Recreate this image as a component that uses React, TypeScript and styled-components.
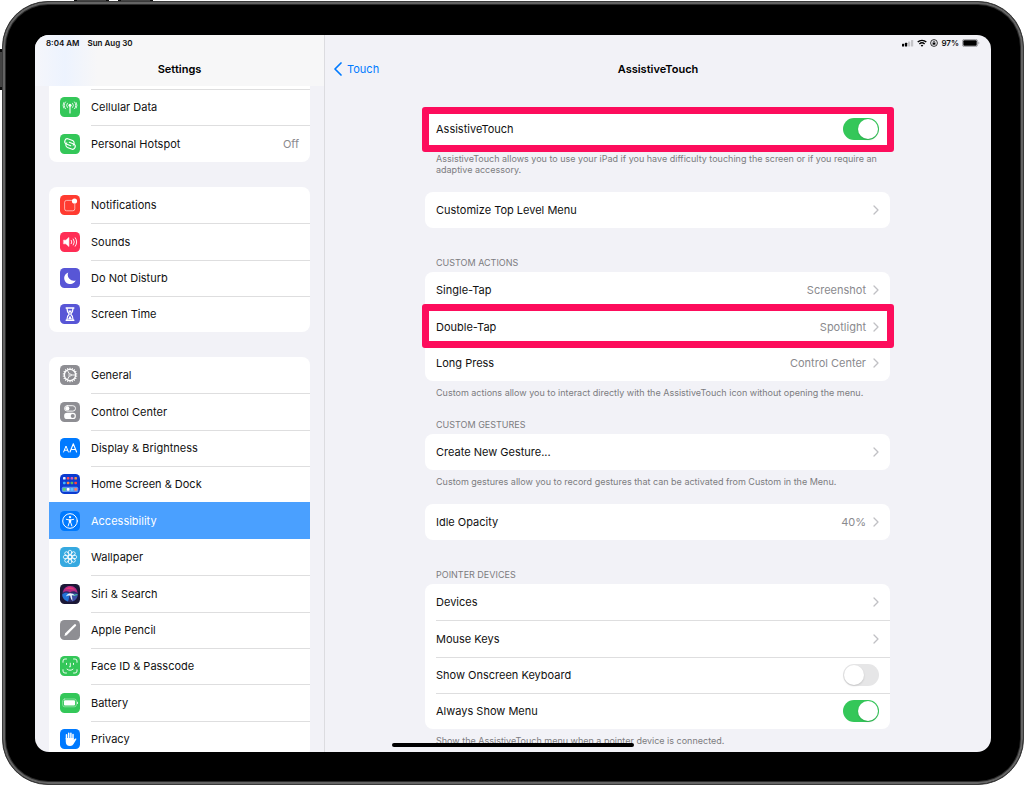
import React, { useState } from "react";
import styled, { createGlobalStyle } from "styled-components";

const PINK = "#fd0d5c";
const GREEN = "#34c759";
const GREY = "#8e8e93";
const LINE = "#dededf";

const GlobalStyle = createGlobalStyle`
  *, *::before, *::after { box-sizing: border-box; }
  body {
    margin: 0;
    background: #fff;
    font-family: Inter, "Liberation Sans", sans-serif;
    font-size: 11px;
    color: #111;
  }
  h1, h2, p, ul { margin: 0; padding: 0; }
`;

const Page = styled.div`
  position: relative;
  height: 100vh;
  padding: 1px 0 0 2px;
  overflow: hidden;
`;

const HardwareKey = styled.div`
  position: absolute;
  border: solid #0c0c0c;
  background: #444;
`;

const TopKey = styled(HardwareKey)<{ $left: number }>`
  top: 0;
  left: ${(p) => p.$left}px;
  width: 35px;
  height: 4px;
  border-width: 0 3px;
`;

const SideKey = styled(HardwareKey)`
  left: 0;
  top: 49px;
  width: 4px;
  height: 41px;
  border-width: 3px 0;
`;

const Device = styled.div`
  position: relative;
  display: flex;
  height: 100%;
  padding: 33px 32px 32px;
  border: 1px solid #3a3a3a;
  border-radius: 46px;
  background: #000;
  box-shadow: inset 0 0 0 2px #646464, inset 0 0 0 3px #2c2c2c;
`;

const Screen = styled.div`
  position: relative;
  flex: 1;
  min-width: 0;
  display: grid;
  grid-template-columns: 290px minmax(0, 1fr);
  overflow: hidden;
  border-radius: 14px;
  background: #f2f2f7;
`;

const Sidebar = styled.nav`
  display: flex;
  flex-direction: column;
  min-height: 0;
  border-right: 1px solid #dcdce0;
`;

const PaneTop = styled.header`
  flex: none;
  height: 51px;
`;

const SidebarTop = styled(PaneTop)`
  background: linear-gradient(90deg, #f5f6fb 0, #edf3fe 30px, #f7f7f8 62px);
`;

const StatusBar = styled.div<{ $end?: boolean }>`
  display: flex;
  align-items: center;
  justify-content: ${(p) => (p.$end ? "flex-end" : "flex-start")};
  gap: ${(p) => (p.$end ? 3 : 8)}px;
  height: 16px;
  padding: 0 11px;
  font-size: 8px;
  font-weight: 600;
`;

const TitleBar = styled.div`
  display: grid;
  grid-template-columns: 1fr auto 1fr;
  align-items: center;
  height: 35px;
  padding: 0 9px;
`;

const Title = styled.h1`
  grid-column: 2;
  font-size: 11px;
  line-height: 16px;
  font-weight: 600;
  color: #000;
`;

const BackLink = styled.a`
  display: flex;
  align-items: center;
  gap: 5px;
  color: #007aff;
  text-decoration: none;
  line-height: 16px;
`;

const SidebarList = styled.div`
  flex: 1;
  min-height: 0;
  overflow: hidden;
  display: flex;
  flex-direction: column;
  gap: 25px;
  padding: 0 14px;
`;

const MenuGroup = styled.ul<{ $continued?: boolean }>`
  flex: none;
  list-style: none;
  overflow: hidden;
  background: #fff;
  border-radius: ${(p) => (p.$continued ? "0 0 8px 8px" : "8px")};
  padding-top: ${(p) => (p.$continued ? 3 : 0)}px;
`;

const MenuLink = styled.a<{ $active?: boolean }>`
  display: flex;
  align-items: stretch;
  gap: 11px;
  height: 36px;
  padding-left: 11px;
  color: ${(p) => (p.$active ? "#fff" : "inherit")};
  background: ${(p) => (p.$active ? "#4aa0ff" : "transparent")};
  text-decoration: none;

  li:nth-child(5n + 2) > &, li:nth-child(5n + 5) > & { height: 37px; }

  svg { align-self: center; flex: none; }
`;

const MenuText = styled.span<{ $line?: boolean }>`
  flex: 1;
  display: flex;
  align-items: center;
  justify-content: space-between;
  padding-right: 11px;
  box-shadow: ${(p) => (p.$line ? `inset 0 1px ${LINE}` : "none")};
`;

const Muted = styled.span`
  color: #8a8a8e;
`;

const Main = styled.main`
  display: flex;
  flex-direction: column;
  min-height: 0;
  overflow: hidden;
`;

const MainBody = styled.div`
  display: flex;
  flex-direction: column;
  gap: 17px;
  padding: 25px 101px 0 100px;
`;

const Section = styled.section<{ $bare?: boolean }>`
  padding-bottom: ${(p) => (p.$bare ? 8 : 0)}px;
`;

const SectionTitle = styled.h2`
  padding: 4px 11px;
  font-size: 9px;
  line-height: 11px;
  font-weight: 400;
  color: #7c7c80;
  text-transform: uppercase;
`;

const Note = styled.p`
  padding: 6px 11px 0;
  font-size: 9px;
  line-height: 11px;
  color: #7c7c80;
`;

const Card = styled.div`
  border-radius: 8px;
  background: #fff;
`;

const Row = styled.div`
  position: relative;
  display: flex;
  height: 36px;
  padding-left: 11px;

  &:nth-child(5n + 2), &:nth-child(5n + 5) { height: 37px; }
`;

const rowInner = `
  flex: 1;
  display: flex;
  align-items: center;
  padding: 0 11px 0 0;
  gap: 7px;
`;

const RowButton = styled.button<{ $line?: boolean }>`
  ${rowInner}
  border: 0;
  box-shadow: ${(p) => (p.$line ? `inset 0 1px ${LINE}` : "none")};
  background: none;
  font: inherit;
  color: inherit;
  text-align: left;
`;

const RowLabel = styled.label<{ $line?: boolean }>`
  ${rowInner}
  box-shadow: ${(p) => (p.$line ? `inset 0 1px ${LINE}` : "none")};
`;

const Grow = styled.span`
  flex: 1;
`;

const Switch = styled.input`
  appearance: none;
  position: relative;
  flex: none;
  width: 36px;
  height: 22px;
  margin: 0;
  border-radius: 11px;
  background: #e6e6e7;

  &::after {
    content: "";
    position: absolute;
    top: 1px;
    left: 1px;
    width: 20px;
    height: 20px;
    border-radius: 50%;
    background: #fff;
    box-shadow: 0 1px 2px rgba(0, 0, 0, 0.15);
  }
  &:checked { background: ${GREEN}; }
  &:checked::after { left: 15px; }
`;

const Highlight = styled.span<{ $height: number }>`
  position: absolute;
  top: -4px;
  left: -3px;
  right: -4px;
  height: ${(p) => p.$height}px;
  border: 7px solid ${PINK};
  border-radius: 3px;
  pointer-events: none;
  z-index: 1;
`;

const HomeIndicator = styled.div`
  position: absolute;
  bottom: 5px;
  left: 50%;
  width: 242px;
  height: 4px;
  margin-left: -121px;
  border-radius: 2px;
  background: #000;
  z-index: 2;
`;

function Tile({ fill, children }: { fill: string; children: React.ReactNode }) {
  return (
    <svg width="20" height="20" viewBox="0 0 20 20" fill="none" stroke="#fff" strokeLinecap="round" strokeLinejoin="round" aria-hidden="true">
      <rect width="20" height="20" rx="4.5" fill={fill} stroke="none" />
      {children}
    </svg>
  );
}

const spokes = (n: number) => Array.from({ length: n }, (_, i) => (i * 360) / n);

const icons = {
  cellular: (
    <Tile fill={GREEN}>
      <circle cx="10" cy="8.3" r="1.5" fill="#fff" stroke="none" />
      <path d="M10 9v7" strokeWidth="1.1" />
      <path d="M7.4 6.200a3.200 3.200 0 0 0 0 4.300M12.600 6.200a3.200 3.200 0 0 1 0 4.300M5.500 4.900a5 5 0 0 0 0 6.900M14.500 4.900a5 5 0 0 1 0 6.900M3.700 5.600a6 6 0 0 0 0 5.400M16.300 5.600a6 6 0 0 1 0 5.400" strokeWidth=".8" />
    </Tile>
  ),
  hotspot: (
    <Tile fill={GREEN}>
      <g transform="rotate(22 10 10)" strokeWidth="1.1">
        <path d="M11.300 11.300H6.700a2.700 2.700 0 0 1 0-5.400h4.400a2.700 2.700 0 0 1 2.300 4" />
        <path d="M8.700 8.700h4.600a2.700 2.700 0 0 1 0 5.400H8.900a2.700 2.700 0 0 1-2.300-4" />
      </g>
    </Tile>
  ),
  notifications: (
    <Tile fill="#ff3b30">
      <path d="M11.500 5.400H6.600a2 2 0 0 0-2 2v6.400a2 2 0 0 0 2 2h6.200a2 2 0 0 0 2-2V9" strokeWidth=".7" strokeOpacity=".85" />
      <circle cx="14.500" cy="6" r="2.600" fill="#fff" stroke="none" />
    </Tile>
  ),
  sounds: (
    <Tile fill="#ff2d55">
      <path d="M3.800 8.200h2.100l3-2.700v9l-3-2.700H3.800z" fill="#fff" strokeWidth=".6" />
      <path d="M11.300 8.300a2.900 2.900 0 0 1 0 3.400M13.300 7a5 5 0 0 1 0 6M15.300 5.800a7.400 7.400 0 0 1 0 8.400" strokeWidth=".9" />
    </Tile>
  ),
  moon: (
    <Tile fill="#5856d6">
      <path d="M8.300 4.400a6 6 0 1 0 7.400 8.100A6 6 0 0 1 8.300 4.400z" fill="#fff" stroke="none" />
    </Tile>
  ),
  hourglass: (
    <Tile fill="#5856d6">
      <path d="M6.200 4h7.600M6.200 16.200h7.600" strokeWidth="1.500" />
      <path d="M7 4.500c0 3.200.6 4 2.300 5.600C7.600 11.600 7 12.800 7 15.800M13 4.500c0 3.200-.6 4-2.300 5.600 1.700 1.500 2.300 2.700 2.300 5.700" strokeWidth="1.300" />
      <path d="M8.300 6.500h3.400L10 9.500zM10 11.500l2 3.700H8z" fill="#fff" stroke="none" />
    </Tile>
  ),
  general: (
    <Tile fill={GREY}>
      <circle cx="10" cy="10" r="5.600" strokeWidth="1.300" />
      {spokes(18).map((a) => (
        <path key={a} d="M10 2.700v1.500" strokeWidth="1.100" strokeLinecap="butt" transform={`rotate(${a} 10 10)`} />
      ))}
      <path d="M10 10h5M10 10l-2.600-4.500M10 10l-2.600 4.500" strokeWidth=".9" />
      <circle cx="10" cy="10" r="1.200" fill={GREY} strokeWidth=".7" />
    </Tile>
  ),
  control: (
    <Tile fill={GREY}>
      <rect x="4.500" y="3.700" width="11" height="5.400" rx="2.700" strokeWidth=".9" />
      <circle cx="7.300" cy="6.400" r="2.100" fill="#fff" stroke="none" />
      <rect x="4.100" y="10.700" width="11.800" height="6.400" rx="3.200" fill="#fff" stroke="none" />
      <circle cx="12.700" cy="13.900" r="2" fill={GREY} stroke="none" />
    </Tile>
  ),
  display: (
    <Tile fill="#007aff">
      <path d="M3.600 14l2.400-6 2.400 6M4.400 12.200h3.200" strokeWidth="1" />
      <path d="M10 14l3.300-8.200 3.300 8.200M11.100 11.500h4.400" strokeWidth="1.100" />
    </Tile>
  ),
  home: (
    <Tile fill="#0b3bd0">
      {["#e8eefc", "#ff4b5c", "#d65ab8", "#f0904a", "#3fb6ff", "#ff8a3c", "#5fb45f", "#ff4040"].map((c, i) => (
        <rect key={i} x={3 + (i % 4) * 3.8} y={3 + Math.floor(i / 4) * 4.7} width="2.600" height="2.600" rx=".7" fill={c} stroke="none" />
      ))}
      <rect x="1.800" y="12.800" width="16.400" height="5.200" rx="1.500" fill="#5a94ee" stroke="none" />
      {["#55d868", "#fff", "#5fc8ff", "#ff7a6a"].map((c, i) => (
        <rect key={c} x={3 + i * 3.8} y="14" width="2.700" height="2.700" rx=".7" fill={c} stroke="none" />
      ))}
    </Tile>
  ),
  accessibility: (
    <Tile fill="#007aff">
      <circle cx="10" cy="10" r="7.300" strokeWidth="1" />
      <circle cx="10" cy="6.100" r="1.200" fill="#fff" stroke="none" />
      <path d="M6.300 8.300l2.700.6h2l2.700-.6M9.300 9v2.500L8.100 15M10.700 9v2.500l1.200 3.500" strokeWidth="1" />
      <path d="M9 8.800h2v3H9z" fill="#fff" stroke="none" />
    </Tile>
  ),
  wallpaper: (
    <Tile fill="#36a9e0">
      {spokes(8).map((a) => (
        <ellipse key={a} cx="10" cy="5.700" rx="1.900" ry="2.500" strokeWidth=".75" transform={`rotate(${a} 10 10)`} />
      ))}
      <circle cx="10" cy="10" r="2" strokeWidth="1.100" />
    </Tile>
  ),
  siri: (
    <Tile fill="#1b1836">
      <circle cx="10" cy="10" r="8" fill="#2b2a68" stroke="none" />
      <path d="M3 8.500C4 3 8 1.800 10.500 2c4 .2 6.500 3 7 7-2.500-2-5-2.500-7.500-.5C7.500 6.800 5.500 7 3 8.500z" fill="#b62a84" stroke="none" />
      <path d="M5.500 5.200C8 2.600 12.500 2.600 15 5.800c-3-.8-6.500-.8-9.500-.6z" fill="#e23b72" stroke="none" />
      <path d="M2.200 10.500C5 8 8 8.500 10 10.500c-1 2-1 4.500-2 7-3.200-.8-5.700-3.600-5.800-7z" fill="#2273d8" stroke="none" />
      <path d="M11 10.500c2-2 4.500-1.500 6.800 0-.3 3.200-2.500 6.200-5.300 7 .4-2.600 0-5-1.500-7z" fill="#3a4fa8" stroke="none" />
      <path d="M6 12.500C7 9.500 11.500 7.500 15 11.800c-1.500-.8-2.400-.8-3.200-.3.500 1.700.7 3.600.7 5.500-1.500-1.500-2-3.500-2.300-5.300-1.500-.5-3-.2-4.200.8z" fill="#e9f2ff" stroke="none" />
      <path d="M14 11.300l3-.6" stroke="#45d6a0" strokeWidth="1" />
    </Tile>
  ),
  pencil: (
    <Tile fill={GREY}>
      <path d="M6.300 13.900L15 5.200" strokeWidth="2.300" />
      <path d="M4.400 15.900l1-3 2 2z" fill="#fff" stroke="none" />
    </Tile>
  ),
  face: (
    <Tile fill={GREEN}>
      <path d="M3 6.300V5a2 2 0 0 1 2-2h1.500M13.500 3H15a2 2 0 0 1 2 2v1.300M17 13.700V15a2 2 0 0 1-2 2h-1.500M6.500 17H5a2 2 0 0 1-2-2v-1.300M6.500 7.300v1.200M13.500 7.300v1.200M10.300 7.200v3.600h-.8M7 13.200c1.700 1.500 4.300 1.500 6 0" strokeWidth=".9" />
    </Tile>
  ),
  battery: (
    <Tile fill={GREEN}>
      <rect x="2.700" y="6" width="13.600" height="7.800" rx="2" strokeWidth=".5" strokeOpacity=".8" />
      <rect x="4" y="7.300" width="11" height="5.200" rx=".9" fill="#fff" stroke="none" />
      <path d="M17.500 9.200v1.400" strokeWidth=".8" />
    </Tile>
  ),
  hand: (
    <Tile fill="#007aff">
      <path d="M6.500 10V5.800M8.700 9V4.200M10.900 9V4.200M13 9.800V5.400" strokeWidth="1.500" />
      <path d="M5.750 9h8v1.800l1.500-1.200c.8-.4 1.500.2 1 1l-2.700 4.400c-.8 1.300-1.700 2-3.500 2-2.700 0-4.300-1.500-4.300-4.500z" fill="#fff" stroke="none" />
    </Tile>
  ),
};

type Item = { label: string; icon: keyof typeof icons; value?: string; active?: boolean };

const menu: Item[][] = [
  [
    { label: "Cellular Data", icon: "cellular" },
    { label: "Personal Hotspot", icon: "hotspot", value: "Off" },
  ],
  [
    { label: "Notifications", icon: "notifications" },
    { label: "Sounds", icon: "sounds" },
    { label: "Do Not Disturb", icon: "moon" },
    { label: "Screen Time", icon: "hourglass" },
  ],
  [
    { label: "General", icon: "general" },
    { label: "Control Center", icon: "control" },
    { label: "Display & Brightness", icon: "display" },
    { label: "Home Screen & Dock", icon: "home" },
    { label: "Accessibility", icon: "accessibility", active: true },
    { label: "Wallpaper", icon: "wallpaper" },
    { label: "Siri & Search", icon: "siri" },
    { label: "Apple Pencil", icon: "pencil" },
    { label: "Face ID & Passcode", icon: "face" },
    { label: "Battery", icon: "battery" },
    { label: "Privacy", icon: "hand" },
  ],
];

const Chevron = () => (
  <svg width="6" height="10" viewBox="0 0 6 10" fill="none" stroke="#c0c0c4" strokeWidth="1.300" strokeLinecap="round" strokeLinejoin="round" aria-hidden="true">
    <path d="M1 1l4 4-4 4" />
  </svg>
);

function LinkRow({ label, value, line, highlight }: { label: string; value?: string; line?: boolean; highlight?: number }) {
  return (
    <Row>
      <RowButton type="button" $line={line}>
        <Grow>{label}</Grow>
        {value && <Muted>{value}</Muted>}
        <Chevron />
      </RowButton>
      {highlight && <Highlight $height={highlight} />}
    </Row>
  );
}

function SwitchRow({ label, on, line, highlight }: { label: string; on: boolean; line?: boolean; highlight?: number }) {
  const [checked, setChecked] = useState(on);
  return (
    <Row>
      <RowLabel $line={line}>
        <Grow>{label}</Grow>
        <Switch type="checkbox" role="switch" checked={checked} onChange={(e) => setChecked(e.target.checked)} />
      </RowLabel>
      {highlight && <Highlight $height={highlight} />}
    </Row>
  );
}

export default function App() {
  return (
    <>
      <GlobalStyle />
      <Page>
        <TopKey $left={74} />
        <TopKey $left={118} />
        <SideKey />
        <Device>
          <Screen>
            <Sidebar aria-label="Settings">
              <SidebarTop>
                <StatusBar>
                  <span>8:04 AM</span>
                  <span>Sun Aug 30</span>
                </StatusBar>
                <TitleBar>
                  <Title>Settings</Title>
                </TitleBar>
              </SidebarTop>
              <SidebarList>
                {menu.map((group, g) => (
                  <MenuGroup key={g} $continued={g === 0}>
                    {group.map((item, i) => (
                      <li key={item.label}>
                        <MenuLink href="#" $active={item.active}>
                          {icons[item.icon]}
                          <MenuText $line={(i > 0 || g === 0) && !item.active && !group[i - 1]?.active}>
                            {item.label}
                            {item.value && <Muted>{item.value}</Muted>}
                          </MenuText>
                        </MenuLink>
                      </li>
                    ))}
                  </MenuGroup>
                ))}
              </SidebarList>
            </Sidebar>

            <Main>
              <PaneTop>
                <StatusBar $end>
                  <svg width="12" height="8" viewBox="0 0 12 8" aria-label="Signal">
                    <rect x="0" y="4.800" width="2.200" height="2.700" rx=".5" />
                    <rect x="3" y="3.700" width="2.200" height="3.800" rx=".5" />
                    <rect x="6" y="2.400" width="2.200" height="5.100" rx=".5" fill="#c4c4c8" />
                    <rect x="9" y="1" width="2.200" height="6.500" rx=".5" fill="#c4c4c8" />
                  </svg>
                  <svg width="10" height="8" viewBox="0 0 10 8" fill="none" stroke="#000" strokeWidth="1.400" aria-label="Wi-Fi">
                    <path d="M.7 3.100a6.200 6.200 0 0 1 8.600 0M2.400 4.900a3.800 3.800 0 0 1 5.200 0" />
                    <path d="M5 7.800L3.700 6.400a1.900 1.900 0 0 1 2.600 0z" fill="#000" stroke="none" />
                  </svg>
                  <svg width="8" height="8" viewBox="0 0 8 8" fill="none" stroke="#000" strokeWidth=".8" aria-label="Rotation lock">
                    <circle cx="4" cy="4" r="3.400" />
                    <rect x="2.600" y="3.700" width="2.800" height="2" fill="#000" stroke="none" />
                    <path d="M3.200 3.800V3a.8.8 0 0 1 1.600 0v.8" strokeWidth=".6" />
                  </svg>
                  <span>97%</span>
                  <svg width="18" height="8" viewBox="0 0 18 8" aria-label="Battery">
                    <rect x=".4" y=".4" width="15.200" height="7.200" rx="2" fill="none" stroke="#8c8c90" strokeWidth=".8" />
                    <rect x="1.300" y="1.300" width="13.400" height="5.400" rx="1" />
                    <path d="M16.500 2.800a1.300 1.300 0 0 1 0 2.400z" fill="#8c8c90" />
                  </svg>
                </StatusBar>
                <TitleBar>
                  <BackLink href="#">
                    <svg width="8" height="14" viewBox="0 0 8 14" fill="none" stroke="#007aff" strokeWidth="1.700" strokeLinecap="round" strokeLinejoin="round" aria-hidden="true">
                      <path d="M7 1L1 7l6 6" />
                    </svg>
                    Touch
                  </BackLink>
                  <Title>AssistiveTouch</Title>
                </TitleBar>
              </PaneTop>

              <MainBody>
                <Section>
                  <Card>
                    <SwitchRow label="AssistiveTouch" on highlight={45} />
                  </Card>
                  <Note>
                    AssistiveTouch allows you to use your iPad if you have difficulty touching the screen or if you require an adaptive accessory.
                  </Note>
                </Section>

                <Section $bare>
                  <Card>
                    <LinkRow label="Customize Top Level Menu" />
                  </Card>
                </Section>

                <Section>
                  <SectionTitle>Custom Actions</SectionTitle>
                  <Card>
                    <LinkRow label="Single-Tap" value="Screenshot" />
                    <LinkRow label="Double-Tap" value="Spotlight" highlight={44} />
                    <LinkRow label="Long Press" value="Control Center" />
                  </Card>
                  <Note>Custom actions allow you to interact directly with the AssistiveTouch icon without opening the menu.</Note>
                </Section>

                <Section>
                  <SectionTitle>Custom Gestures</SectionTitle>
                  <Card>
                    <LinkRow label="Create New Gesture..." />
                  </Card>
                  <Note>Custom gestures allow you to record gestures that can be activated from Custom in the Menu.</Note>
                </Section>

                <Section $bare>
                  <Card>
                    <LinkRow label="Idle Opacity" value="40%" />
                  </Card>
                </Section>

                <Section>
                  <SectionTitle>Pointer Devices</SectionTitle>
                  <Card>
                    <LinkRow label="Devices" />
                    <LinkRow label="Mouse Keys" line />
                    <SwitchRow label="Show Onscreen Keyboard" on={false} line />
                    <SwitchRow label="Always Show Menu" on line />
                  </Card>
                  <Note>Show the AssistiveTouch menu when a pointer device is connected.</Note>
                </Section>
              </MainBody>
            </Main>
            <HomeIndicator />
          </Screen>
        </Device>
      </Page>
    </>
  );
}
